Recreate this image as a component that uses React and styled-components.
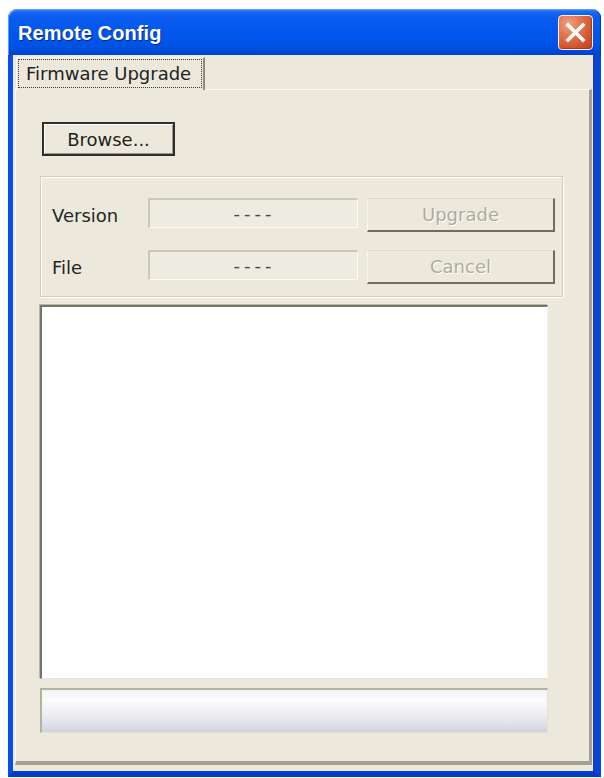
import React from "react";
import styled, { createGlobalStyle, css } from "styled-components";

const GlobalStyle = createGlobalStyle`
  *, *::before, *::after { box-sizing: border-box; }
  html, body { margin: 0; padding: 0; background: #ffffff; }
  body { font-family: "DejaVu Sans", Tahoma, Verdana, sans-serif; }
`;

const FACE = "#ECE9DC";

const Window = styled.div`
  margin: 9px 0 0 8px;
  width: 593px;
  height: 768px;
  display: flex;
  flex-direction: column;
`;

const TitleBar = styled.div`
  height: 46px;
  flex: none;
  display: flex;
  align-items: center;
  justify-content: space-between;
  padding: 2px 8px 0 10px;
  border-radius: 9px 9px 0 0;
  background: linear-gradient(
    to bottom,
    #4a92f8 0%,
    #1a68f2 6%,
    #0a5cf0 18%,
    #0056ec 55%,
    #0052e4 82%,
    #0046d2 94%,
    #0a3fc2 100%
  );
  box-shadow: inset 1px 1px 0 #5a9cf8, inset -1px 0 0 #0a3bbf;
`;

const Title = styled.span`
  font-family: "Liberation Sans", Arial, sans-serif;
  font-weight: 700;
  font-size: 20px;
  color: #ffffff;
  text-shadow: 1px 1px 0 #0a2a8a;
  letter-spacing: 0.1px;
`;

const CloseButton = styled.button`
  width: 35px;
  height: 35px;
  margin-top: -2px;
  padding: 0;
  border: 1px solid #f2f2f2;
  border-radius: 4px;
  background: radial-gradient(
    circle at 30% 25%,
    #f0a284 0%,
    #e2764f 35%,
    #cf4f26 75%,
    #bf4018 100%
  );
  display: flex;
  align-items: center;
  justify-content: center;
  box-shadow: inset -1px -1px 0 #a8381a;
`;

const Frame = styled.div`
  flex: 1;
  display: flex;
  flex-direction: column;
  background: ${FACE};
  border-style: solid;
  border-width: 0 7px 6px 5px;
  border-color: #0a4ee0 #0845d6 #073cc6 #0a4ee0;
  padding: 2px 2px 6px 2px;
  box-shadow: inset 1px 0 0 #e8eefc, inset -1px 0 0 #223c8e;
`;

const TabStrip = styled.div`
  height: 32px;
  flex: none;
  display: flex;
  padding-left: 1px;
`;

const Tab = styled.div`
  position: relative;
  z-index: 1;
  width: 189px;
  height: 33px;
  display: flex;
  background: ${FACE};
  border-top: 1px solid #fbfaf6;
  border-left: 1px solid #fbfaf6;
  border-right: 2px solid #8d8b7e;
`;

const TabLabel = styled.span`
  flex: 1;
  margin: 1px 1px 2px 1px;
  border: 1px dotted #3c3c3c;
  display: flex;
  align-items: center;
  padding-left: 7px;
  font-size: 18px;
  color: #222;
  white-space: nowrap;
`;

const TabPage = styled.div`
  flex: 1;
  display: flex;
  flex-direction: column;
  align-items: flex-start;
  padding: 32px 0 0 24px;
  border-style: solid;
  border-width: 1px 3px 4px 1px;
  border-color: #fbfaf6 #a3a193 #a3a193 #fbfaf6;
`;

const Button = styled.button`
  font-family: "DejaVu Sans", Tahoma, sans-serif;
  font-size: 18px;
  height: 34px;
  padding: 0;
  background: ${FACE};
  color: #1e1e1e;
  ${(p) =>
    p.$default &&
    css`
      width: 133px;
      margin: 0 0 20px 2px;
      border: 2px solid #2e2e2e;
      box-shadow: inset 1px 1px 0 #ffffff, inset -1px -1px 0 #9a988a;
    `}
  ${(p) =>
    p.disabled &&
    css`
      width: 188px;
      color: #aeab9c;
      text-shadow: 1px 1px 0 #ffffff;
      border-style: solid;
      border-width: 1px 2px 2px 1px;
      border-color: #dcd9cc #6f6d61 #6f6d61 #f8f7f2;
    `}
`;

const GroupBox = styled.div`
  margin: 0 0 8px 0;
  width: 523px;
  height: 121px;
  padding: 21px 7px 0 11px;
  border: 1px solid #cfccbd;
  box-shadow: inset 1px 1px 0 #ffffff, 1px 1px 0 #ffffff;
  display: grid;
  grid-template-columns: 87px 210px 188px;
  column-gap: 9px;
  row-gap: 18px;
  align-items: center;
  align-content: start;
`;

const Label = styled.span`
  font-size: 18px;
  color: #252525;
`;

const Field = styled.div`
  height: 30px;
  align-self: start;
  display: flex;
  align-items: center;
  justify-content: center;
  font-size: 18px;
  letter-spacing: 4px;
  padding-left: 2px;
  color: #4a4a4a;
  background: #eeebe0;
  border-style: solid;
  border-width: 2px 1px 1px 2px;
  border-color: #cbc8b9 #fbfaf7 #fbfaf7 #cbc8b9;
`;

const LogArea = styled.div`
  width: 508px;
  height: 374px;
  margin-bottom: 9px;
  background: #ffffff;
  border-style: solid;
  border-width: 2px 1px 1px 2px;
  border-color: #77756a #f3f2ec #e6e4da #77756a;
  box-shadow: -1px -1px 0 #b9b7aa;
`;

const ProgressTrack = styled.div`
  width: 508px;
  height: 45px;
  border-style: solid;
  border-width: 2px 1px 1px 2px;
  border-color: #b5b2a3 #e4e2d8 #e4e2d8 #b5b2a3;
  background: linear-gradient(
    to bottom,
    #f3f3f6 0%,
    #fbfbfc 22%,
    #f1f1f5 50%,
    #e2e2e9 78%,
    #d2d2dc 100%
  );
`;

export default function App() {
  return (
    <>
      <GlobalStyle />
      <Window>
        <TitleBar>
          <Title>Remote Config</Title>
          <CloseButton aria-label="Close">
            <svg width="21" height="21" viewBox="0 0 21 21">
              <path
                d="M3 3 L18 18 M18 3 L3 18"
                stroke="#ffffff"
                strokeWidth="3.6"
                strokeLinecap="square"
                fill="none"
              />
            </svg>
          </CloseButton>
        </TitleBar>
        <Frame>
          <TabStrip>
            <Tab>
              <TabLabel>Firmware Upgrade</TabLabel>
            </Tab>
          </TabStrip>
          <TabPage>
            <Button $default>Browse...</Button>
            <GroupBox>
              <Label>Version</Label>
              <Field>----</Field>
              <Button disabled>Upgrade</Button>
              <Label>File</Label>
              <Field>----</Field>
              <Button disabled>Cancel</Button>
            </GroupBox>
            <LogArea />
            <ProgressTrack />
          </TabPage>
        </Frame>
      </Window>
    </>
  );
}
